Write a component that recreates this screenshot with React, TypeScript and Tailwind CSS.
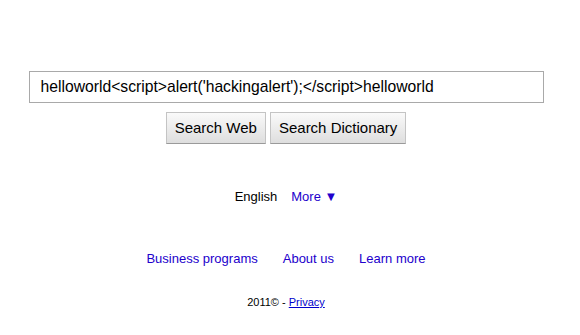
export default function App() {
  return (
    <div className="min-h-screen w-[572px] bg-white font-['Liberation_Sans',Arial,sans-serif]">
      {/* Search */}
      <div className="flex flex-col items-center pt-[71px]">
        <div className="flex h-[32px] w-[515px] items-center border border-[#a9a9a9] pl-[11px] text-[15.7px] text-black">
          helloworld&lt;script&gt;alert('hackingalert');&lt;/script&gt;helloworld
        </div>
        <div className="mt-[9px] flex gap-[4px]">
          <button className="h-[32px] border border-[#c4c4c4] border-b-[#9a9a9a] bg-gradient-to-b from-[#fafafa] to-[#dedede] px-[8px] text-[15px] text-black">
            Search Web
          </button>
          <button className="h-[32px] border border-[#c4c4c4] border-b-[#9a9a9a] bg-gradient-to-b from-[#fafafa] to-[#dedede] px-[8px] text-[15px] text-black">
            Search Dictionary
          </button>
        </div>
      </div>

      {/* Language */}
      <div className="mt-[45px] flex justify-center gap-[14px] text-[13px] leading-[15px]">
        <span className="text-black">English</span>
        <span className="text-[#2200cc]">More ▼</span>
      </div>

      {/* Links */}
      <div className="mt-[47px] flex justify-center gap-[25px] text-[13px] leading-[15px] text-[#2200cc]">
        <span>Business programs</span>
        <span>About us</span>
        <span>Learn more</span>
      </div>

      {/* Footer */}
      <div className="mt-[30px] text-center text-[11px] leading-[13px] text-black">
        2011© - <span className="text-[#0000cc] underline">Privacy</span>
      </div>
    </div>
  );
}
